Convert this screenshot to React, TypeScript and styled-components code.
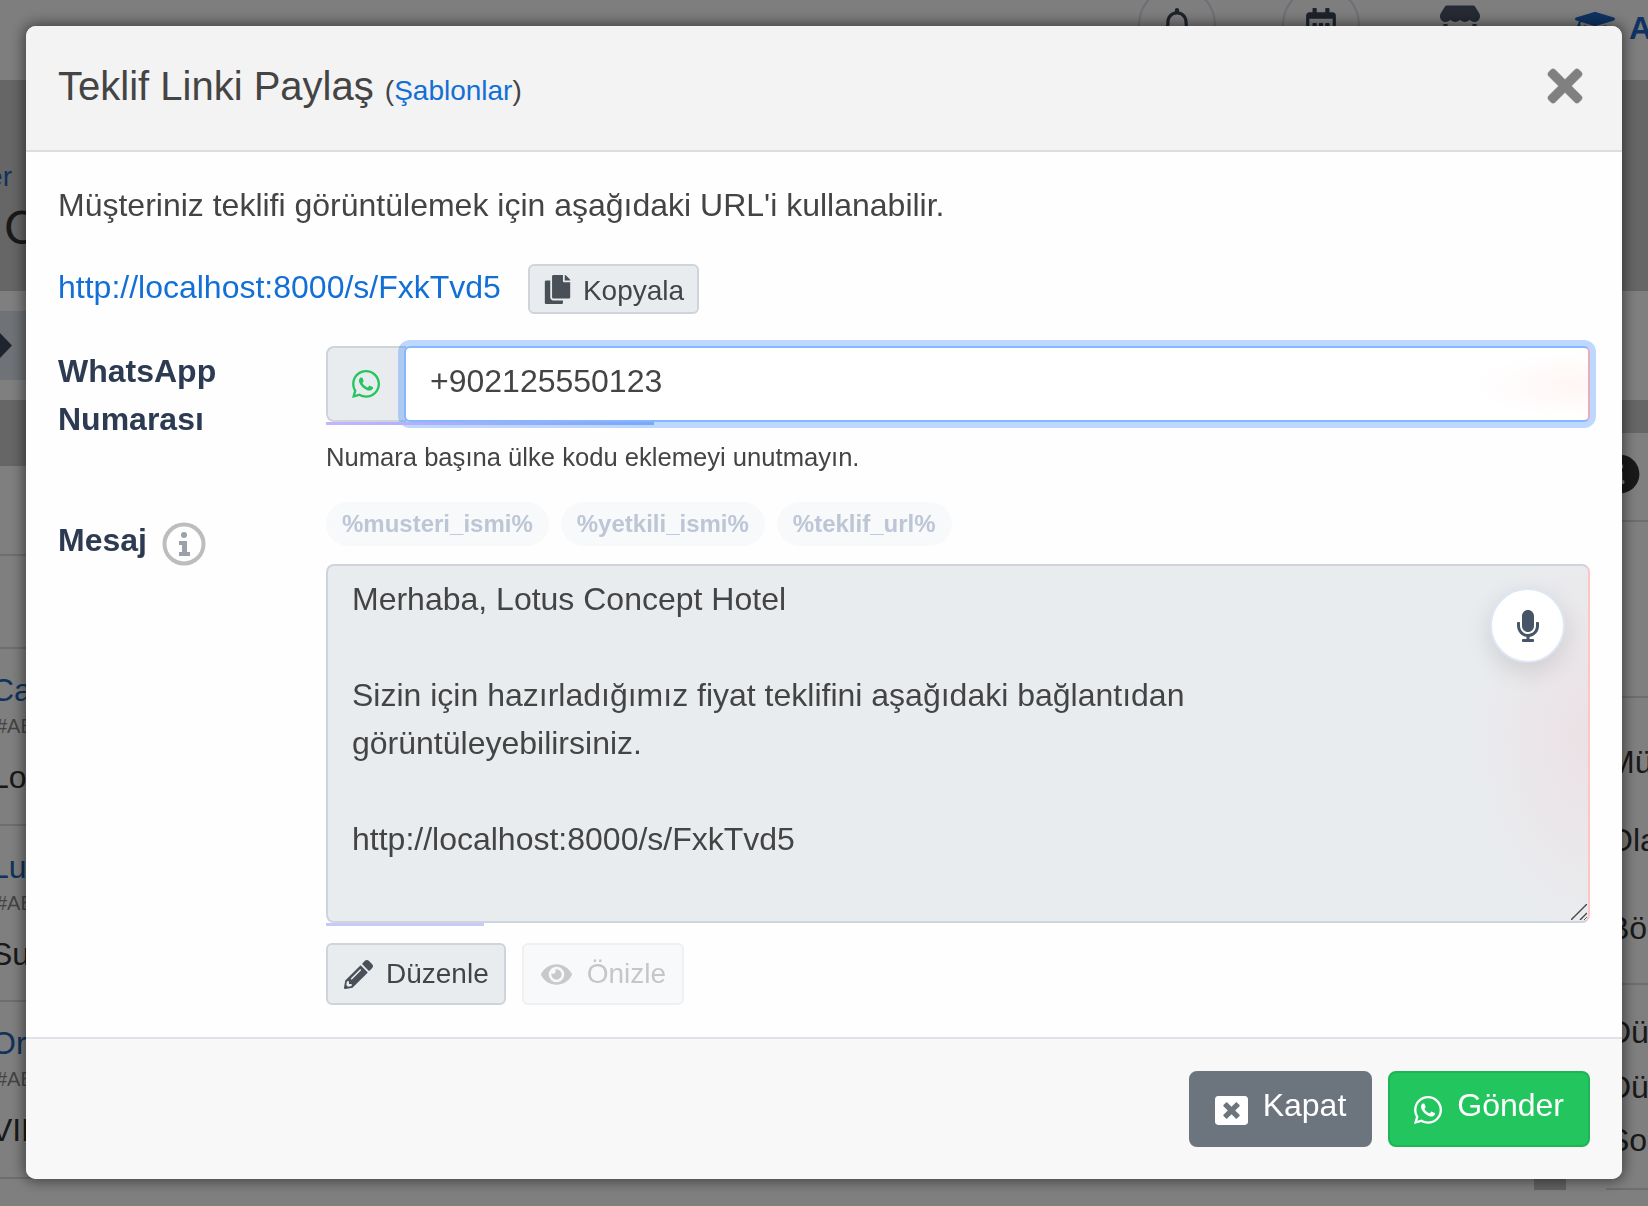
import styled, { createGlobalStyle } from "styled-components";
import {
  FaCopy,
  FaEye,
  FaGraduationCap,
  FaInfoCircle,
  FaMicrophone,
  FaPencilAlt,
  FaRegBell,
  FaRegCalendarAlt,
  FaStore,
  FaTimes,
  FaWhatsapp,
  FaWindowClose,
} from "react-icons/fa";

const GlobalStyle = createGlobalStyle`
  html, body {
    margin: 0;
    height: 100%;
    overflow: hidden;
    background: #fff;
    font-family: "Liberation Sans", Arial, sans-serif;
    color: #444;
  }
  * { box-sizing: border-box; }
`;

/* page behind the modal */
const Page = styled.div`
  width: 1648px;
  height: 1206px;
  overflow: hidden;
`;
const Nav = styled.div`
  height: 80px;
  background: #fcfcfc;
  display: flex;
  align-items: flex-start;
  padding-left: 1138px;
  white-space: nowrap;
  overflow: hidden;
`;
const NavCircle = styled.div`
  width: 78px;
  height: 78px;
  flex: none;
  margin-top: -14px;
  margin-right: 66px;
  border: 2px solid #d9e0ea;
  border-radius: 50%;
  display: flex;
  align-items: center;
  justify-content: center;
  color: #3b4658;
  font-size: 34px;
`;
const NavStore = styled.div`
  flex: none;
  width: 40px;
  margin-left: 14px;
  margin-right: 95px;
  padding-top: 2px;
  color: #4a5568;
  font-size: 40px;
  line-height: 1;
`;
const NavUser = styled.div`
  flex: none;
  display: flex;
  gap: 14px;
  padding-top: 10px;
  color: #1e66c8;
  font-size: 32px;
  font-weight: 700;
  line-height: 36px;
  svg {
    margin-top: -6px;
  }
`;
const HeroBand = styled.div`
  height: 211px;
  background: #cdcdcd;
  padding-top: 79px;
`;
const Breadcrumb = styled.div`
  width: 12px;
  height: 36px;
  display: flex;
  justify-content: flex-end;
  color: #1e66b8;
  font-size: 28px;
  line-height: 36px;
  white-space: nowrap;
`;
const HeroTitle = styled.div`
  margin-top: 4px;
  padding-left: 4px;
  color: #333;
  font-size: 48px;
  line-height: 58px;
`;
const TabStrip = styled.div`
  height: 109px;
  background: #fff;
  padding-top: 20px;
`;
const TabBar = styled.div`
  width: 700px;
  height: 69px;
  background: #dfe5ec;
  display: flex;
  align-items: center;
  color: #3d4a5e;
`;
const Columns = styled.div`
  display: grid;
  grid-template-columns: 1534px 32px 1fr;
`;
const TableHead = styled.div<{ $height: number }>`
  height: ${({ $height }) => $height}px;
  background: #cdcdcd;
`;
const Row = styled.div<{ $height: number; $pad?: number }>`
  height: ${({ $height }) => $height}px;
  padding-top: ${({ $pad }) => $pad ?? 0}px;
  border-bottom: 2px solid #dcdcdc;
  background: #fff;
`;
const Name = styled.div`
  margin-left: -9px;
  color: #1e66b8;
  font-size: 32px;
  line-height: 36px;
  white-space: nowrap;
`;
const Code = styled.div`
  margin-left: -4px;
  margin-top: 1px;
  color: #888;
  font-size: 20px;
  line-height: 34px;
  white-space: nowrap;
`;
const Plain = styled.div`
  margin-left: -9px;
  margin-top: 10px;
  color: #333;
  font-size: 32px;
  line-height: 48px;
  white-space: nowrap;
`;
const Gutter = styled.div`
  background: #c4c4c4;
`;
const Side = styled.div`
  padding-left: 40px;
`;
const SideText = styled.div<{ $top?: number }>`
  margin-top: ${({ $top }) => $top ?? 0}px;
  margin-left: 2px;
  color: #333;
  font-size: 32px;
  line-height: 48px;
  white-space: nowrap;
`;
const SideInfo = styled.div`
  display: flex;
  margin-left: -6px;
  color: #333;
  font-size: 40px;
`;

/* modal */
const Backdrop = styled.div`
  position: fixed;
  inset: 0;
  background: rgba(0, 0, 0, 0.5);
  padding: 26px;
`;
const Modal = styled.div`
  width: 1596px;
  height: 1153px;
  display: flex;
  flex-direction: column;
  background: #fefefe;
  border-radius: 10px;
  overflow: hidden;
  box-shadow: 0 0 14px 2px rgba(0, 0, 0, 0.5);
`;
const Header = styled.div`
  height: 126px;
  flex: none;
  display: flex;
  align-items: center;
  justify-content: space-between;
  padding: 0 48px 0 32px;
  background: #f3f3f3;
  border-bottom: 2px solid #d9dee3;
`;
const Title = styled.h5`
  margin: 0;
  font-size: 40px;
  font-weight: 400;
  line-height: 48px;
  color: #444;
`;
const TitleNote = styled.span`
  font-size: 28px;
`;
const Link = styled.a`
  color: #126fd6;
  text-decoration: none;
`;
const UrlLink = styled(Link)`
  padding-top: 1px;
`;
const CloseButton = styled.button`
  width: 34px;
  height: 50px;
  margin-bottom: 4px;
  padding: 0;
  border: 0;
  background: none;
  color: #808080;
  font-size: 50px;
  line-height: 0;
  svg {
    stroke: currentColor;
    stroke-width: 4px;
  }
`;
const Body = styled.div`
  flex: 1;
  padding: 29px 32px 0;
`;
const Intro = styled.p`
  margin: 0 0 33px;
  font-size: 32px;
  line-height: 48px;
`;
const UrlRow = styled.div`
  display: flex;
  align-items: flex-start;
  gap: 27px;
  margin-bottom: 32px;
  font-size: 32px;
  line-height: 48px;
`;
const SoftButton = styled.button<{ $off?: boolean; $height: number; $pad: string; $gap: number }>`
  height: ${({ $height }) => $height}px;
  display: inline-flex;
  align-items: center;
  gap: ${({ $gap }) => $gap}px;
  padding: ${({ $pad }) => $pad};
  background: ${({ $off }) => ($off ? "#f8f9fa" : "#e9ecef")};
  border: 2px solid ${({ $off }) => ($off ? "#eff0f2" : "#ced4da")};
  border-radius: 6px;
  color: ${({ $off }) => ($off ? "#c4c6c9" : "#444")};
  font-family: inherit;
  font-size: 28px;
  line-height: 1;
  svg {
    color: ${({ $off }) => ($off ? "#c8c9cb" : "#4a5058")};
    flex: none;
  }
`;
const CopyButton = styled(SoftButton)`
  margin-top: 2px;
  span {
    margin-top: 4px;
  }
`;
const FormRow = styled.div`
  display: grid;
  grid-template-columns: 268px 1264px;
`;
const Label = styled.label`
  display: block;
  margin-top: 1px;
  color: #2d3b52;
  font-size: 32px;
  font-weight: 700;
  line-height: 48px;
`;
const MessageLabel = styled(Label)`
  display: flex;
  align-items: flex-start;
  gap: 15px;
  margin-top: 14px;
`;
const InfoMark = styled.svg`
  flex: none;
  margin-top: 6px;
`;
const InputGroup = styled.div`
  position: relative;
  display: flex;
  height: 76px;
  &::after {
    content: "";
    position: absolute;
    left: 0;
    top: 76px;
    width: 328px;
    height: 3px;
    background: linear-gradient(90deg, #c4b5fd, #7aa7fb);
    z-index: 2;
  }
`;
const Addon = styled.div`
  width: 80px;
  flex: none;
  display: flex;
  align-items: center;
  padding-left: 24px;
  background: #e9ecef;
  border: 2px solid #ced4da;
  border-right: 0;
  border-radius: 8px 0 0 8px;
  color: #22c55e;
`;
const WhatsappIcon = styled(FaWhatsapp)`
  width: 28px;
  height: 32px;
  flex: none;
`;
const PhoneInput = styled.input`
  position: relative;
  z-index: 1;
  flex: 1;
  min-width: 0;
  margin-left: -2px;
  padding: 0 24px 5px 24px;
  border: 2px solid #86b7fe;
  border-right-color: #e8adbd;
  border-radius: 6px;
  outline: 0;
  background: radial-gradient(ellipse 115px 34px at 100% 52%, #fff5f4, rgba(255, 255, 255, 0)) #fff;
  box-shadow: 0 0 0 6px rgba(13, 110, 253, 0.27);
  color: #444;
  font-family: inherit;
  font-size: 32px;
`;
const Help = styled.div`
  margin-top: 16px;
  margin-bottom: 26px;
  font-size: 25.6px;
  line-height: 38px;
  color: #444;
`;
const Chips = styled.div`
  display: flex;
  gap: 12px;
  margin-bottom: 18px;
`;
const Chip = styled.span`
  height: 44px;
  padding: 0 16px;
  border-radius: 22px;
  background: #f8f9fb;
  color: #bcc6d5;
  font-size: 24px;
  font-weight: 700;
  line-height: 43px;
`;
const MessageBox = styled.div`
  position: relative;
  height: 359px;
  &::after {
    content: "";
    position: absolute;
    left: 0;
    top: 359px;
    width: 158px;
    height: 3px;
    background: #c9c9f8;
  }
`;
const MessageArea = styled.textarea`
  display: block;
  width: 100%;
  height: 100%;
  padding: 9px 120px 0 24px;
  border: 2px solid #ced4de;
  border-right-color: #ffc4c4;
  border-radius: 8px;
  outline: 0;
  background: radial-gradient(ellipse 120px 200px at 100% 48%, #ebe1e5, rgba(233, 236, 239, 0)) #e9ecef;
  color: #444;
  font-family: inherit;
  font-size: 32px;
  line-height: 48px;
`;
const ResizeGrip = styled.svg`
  position: absolute;
  right: 3px;
  bottom: 3px;
  pointer-events: none;
`;
const MicButton = styled.button`
  position: absolute;
  top: 24px;
  right: 25px;
  width: 75px;
  height: 75px;
  padding: 0;
  display: flex;
  align-items: center;
  justify-content: center;
  border: 2px solid #dde6f4;
  border-radius: 50%;
  background: #fff;
  color: #475569;
  box-shadow: 0 8px 26px rgba(0, 0, 0, 0.12);
`;
const EditActions = styled.div`
  display: flex;
  gap: 16px;
  margin-top: 20px;
`;
const Footer = styled.div`
  height: 142px;
  flex: none;
  display: flex;
  justify-content: flex-end;
  gap: 16px;
  padding: 32px;
  background: #f8f8f8;
  border-top: 2px solid #e0e2ea;
`;
const ActionButton = styled.button<{ $tone: string; $edge: string }>`
  height: 76px;
  display: flex;
  align-items: center;
  gap: 15px;
  padding: 0 24px;
  background: ${({ $tone }) => $tone};
  border: 2px solid ${({ $edge }) => $edge};
  border-radius: 8px;
  color: #fff;
  font-family: inherit;
  font-size: 32px;
  svg {
    margin-top: 2px;
    flex: none;
  }
  span {
    margin-bottom: 7px;
  }
`;

const rows = [
  { name: "Cam Otel", code: "#AB1201", plain: "Lotus Concept Hotel" },
  { name: "Luna Otel", code: "#AB1202", plain: "Suit Oda" },
  { name: "Orkide Otel", code: "#AB1203", plain: "VIP Transfer" },
];

const message = `Merhaba, Lotus Concept Hotel

Sizin için hazırladığımız fiyat teklifini aşağıdaki bağlantıdan görüntüleyebilirsiniz.

http://localhost:8000/s/FxkTvd5`;

const BackgroundPage = () => (
  <Page>
    <Nav>
      <NavCircle>
        <FaRegBell />
      </NavCircle>
      <NavCircle>
        <FaRegCalendarAlt />
      </NavCircle>
      <NavStore>
        <FaStore />
      </NavStore>
      <NavUser>
        <FaGraduationCap size={40} />
        <span>Admin</span>
      </NavUser>
    </Nav>
    <HeroBand>
      <Breadcrumb>Teklifler</Breadcrumb>
      <HeroTitle>Cam</HeroTitle>
    </HeroBand>
    <TabStrip>
      <TabBar>
        <svg width="12" height="25" viewBox="0 0 12 25">
          <polygon points="0,0 12,12.5 0,25" fill="currentColor" />
        </svg>
      </TabBar>
    </TabStrip>
    <Columns>
      <div>
        <TableHead $height={66} />
        <Row $height={90} />
        <Row $height={93} />
        {rows.map((row) => (
          <Row $height={176.5} $pad={23} key={row.code}>
            <Name>{row.name}</Name>
            <Code>{row.code}</Code>
            <Plain>{row.plain}</Plain>
          </Row>
        ))}
      </div>
      <Gutter />
      <Side>
        <TableHead $height={33} />
        <Row $height={89} $pad={21}>
          <SideInfo>
            <FaInfoCircle />
          </SideInfo>
        </Row>
        <Row $height={176} />
        <Row $height={287} $pad={40}>
          <SideText>Müşteri</SideText>
          <SideText $top={30}>Olay</SideText>
          <SideText $top={40}>Bölüm</SideText>
        </Row>
        <Row $height={205} $pad={23}>
          <SideText>Düzenle</SideText>
          <SideText $top={7}>Düzenle</SideText>
          <SideText $top={5}>Son</SideText>
        </Row>
      </Side>
    </Columns>
  </Page>
);

const App = () => {
  return (
    <>
      <GlobalStyle />
      <BackgroundPage />
      <Backdrop>
        <Modal>
          <Header>
            <Title>
              Teklif Linki Paylaş{" "}
              <TitleNote>
                (<Link href="#">Şablonlar</Link>)
              </TitleNote>
            </Title>
            <CloseButton>
              <FaTimes size={50} />
            </CloseButton>
          </Header>
          <Body>
            <Intro>Müşteriniz teklifi görüntülemek için aşağıdaki URL'i kullanabilir.</Intro>
            <UrlRow>
              <UrlLink href="#">http://localhost:8000/s/FxkTvd5</UrlLink>
              <CopyButton $height={50} $pad="0 13px" $gap={11}>
                <FaCopy size={29} />
                <span>Kopyala</span>
              </CopyButton>
            </UrlRow>
            <FormRow>
              <Label>
                WhatsApp
                <br />
                Numarası
              </Label>
              <div>
                <InputGroup>
                  <Addon>
                    <WhatsappIcon />
                  </Addon>
                  <PhoneInput readOnly value="+902125550123" />
                </InputGroup>
                <Help>Numara başına ülke kodu eklemeyi unutmayın.</Help>
              </div>
            </FormRow>
            <FormRow>
              <MessageLabel>
                Mesaj
                <InfoMark width="44" height="44" viewBox="0 0 44 44">
                  <circle cx="22" cy="22" r="19.5" fill="none" stroke="#bdbdbd" strokeWidth="4" />
                  <circle cx="22" cy="13" r="3" fill="#9aa1ab" />
                  <path d="M17 19h8v11h3v4H17v-4h3v-7h-3z" fill="#9aa1ab" />
                </InfoMark>
              </MessageLabel>
              <div>
                <Chips>
                  <Chip>%musteri_ismi%</Chip>
                  <Chip>%yetkili_ismi%</Chip>
                  <Chip>%teklif_url%</Chip>
                </Chips>
                <MessageBox>
                  <MessageArea readOnly defaultValue={message} />
                  <ResizeGrip width="16" height="16" viewBox="0 0 16 16">
                    <path d="M0 16L16 0M9 16l7-7" stroke="#444" strokeWidth="1.4" fill="none" />
                  </ResizeGrip>
                  <MicButton>
                    <FaMicrophone size={32} />
                  </MicButton>
                </MessageBox>
                <EditActions>
                  <SoftButton $height={62} $pad="0 15px 0 16px" $gap={13}>
                    <FaPencilAlt size={29} />
                    Düzenle
                  </SoftButton>
                  <SoftButton $off $height={62} $pad="0 16px 0 17px" $gap={15}>
                    <FaEye size={31} />
                    Önizle
                  </SoftButton>
                </EditActions>
              </div>
            </FormRow>
          </Body>
          <Footer>
            <ActionButton $tone="#6c757d" $edge="#6c757d">
              <FaWindowClose size={33} />
              <span>Kapat</span>
            </ActionButton>
            <ActionButton $tone="#22c55e" $edge="#1fb556">
              <WhatsappIcon />
              <span>Gönder</span>
            </ActionButton>
          </Footer>
        </Modal>
      </Backdrop>
    </>
  );
};

export default App;
